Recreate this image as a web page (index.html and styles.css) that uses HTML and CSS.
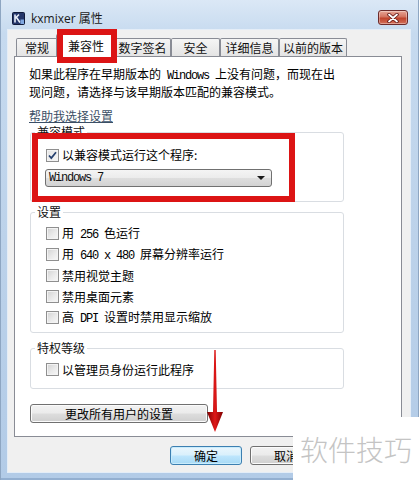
FILE: index.html
```html
<!DOCTYPE html>
<html lang="zh-CN">
<head>
  <meta charset="UTF-8">
  <meta name="viewport" content="width=device-width, initial-scale=1.0">
  <title>kxmixer 属性</title>
  <link rel="stylesheet" href="styles.css">
</head>
<body>
  <div class="window">
    <div class="titlebar">
      <svg class="app-icon" width="13" height="13" viewBox="0 0 13 13">
        <rect x="0.5" y="0.5" width="12" height="12" rx="1" fill="#24366a" stroke="#101a3a"/>
        <path d="M3 2.5v8M3 6.5l4-4M4.5 5.5l3.5 5" stroke="#e8eef8" stroke-width="1.6" fill="none"/>
        <rect x="8.5" y="7.5" width="3.5" height="4.5" fill="#7fa7e0"/>
      </svg>
      <span class="title">kxmixer 属性</span>
      <div class="close-btn">
        <svg width="12" height="10" viewBox="0 0 12 10">
          <path d="M2 1.5l8 7M10 1.5l-8 7" stroke="#5a1010" stroke-width="3.4" stroke-linecap="round"/>
          <path d="M2 1.5l8 7M10 1.5l-8 7" stroke="#ffffff" stroke-width="1.8" stroke-linecap="round"/>
        </svg>
      </div>
    </div>

    <div class="client">
      <div class="tabs">
        <div class="tab tab-general">常规</div>
        <div class="tab tab-active">兼容性</div>
        <div class="tab tab-sign">数字签名</div>
        <div class="tab tab-security">安全</div>
        <div class="tab tab-details">详细信息</div>
        <div class="tab tab-prev">以前的版本</div>
      </div>

      <div class="panel">
        <p class="intro">如果此程序在早期版本的<span class="mono"> Windows </span>上没有问题，而现在出<br>现问题，请选择与该早期版本匹配的兼容模式。</p>
        <a class="help-link" href="#">帮助我选择设置</a>

        <fieldset class="group group-compat">
          <legend>兼容模式</legend>
          <label class="check">
            <span class="box checked"><svg width="9" height="9" viewBox="0 0 9 9"><path d="M1 4.5l2.3 2.6L8 1.2" stroke="#243f6e" stroke-width="1.7" fill="none"/></svg></span>
            <span class="check-text">以兼容模式运行这个程序:</span>
          </label>
          <div class="select">
            <span class="mono select-text">Windows 7</span>
            <span class="select-arrow"></span>
          </div>
        </fieldset>

        <fieldset class="group group-settings">
          <legend>设置</legend>
          <label class="check row"><span class="box"></span><span class="check-text">用<span class="mono"> 256 </span>色运行</span></label>
          <label class="check row"><span class="box"></span><span class="check-text">用<span class="mono"> 640 x 480 </span>屏幕分辨率运行</span></label>
          <label class="check row"><span class="box"></span><span class="check-text">禁用视觉主题</span></label>
          <label class="check row"><span class="box"></span><span class="check-text">禁用桌面元素</span></label>
          <label class="check row"><span class="box"></span><span class="check-text">高<span class="mono"> DPI </span>设置时禁用显示缩放</span></label>
        </fieldset>

        <fieldset class="group group-priv">
          <legend>特权等级</legend>
          <label class="check row"><span class="box"></span><span class="check-text">以管理员身份运行此程序</span></label>
        </fieldset>

        <button class="btn btn-all-users">更改所有用户的设置</button>
      </div>

      <div class="actions">
        <button class="btn btn-dialog btn-default">确定</button>
        <button class="btn btn-dialog">取消</button>
        <button class="btn btn-dialog">应用(A)</button>
      </div>
    </div>

    <!-- annotations drawn over the dialog -->
    <div class="mark mark-tab"></div>
    <div class="mark mark-compat"></div>
    <svg class="pointer" width="20" height="86" viewBox="0 0 20 86">
      <defs>
        <linearGradient id="arrowFill" x1="0" y1="0" x2="1" y2="0">
          <stop offset="0" stop-color="#7e0000"/>
          <stop offset="0.5" stop-color="#e01818"/>
          <stop offset="1" stop-color="#7e0000"/>
        </linearGradient>
      </defs>
      <path d="M9.3 2L10.7 2L12 64L18 64L10 84L2 64L8 64Z" fill="url(#arrowFill)"/>
    </svg>
    <div class="watermark">软件技巧</div>
  </div>
</body>
</html>
```

FILE: styles.css
```css
* {
    box-sizing: border-box;
}

body {
    margin: 0;
    width: 419px;
    height: 480px;
    overflow: hidden;
    font-family: "Noto Sans CJK SC", "Noto Sans", sans-serif;
    font-size: 12px;
    color: #000000;
}

.window {
    position: relative;
    width: 419px;
    height: 480px;
    display: flex;
    flex-direction: column;
    background: linear-gradient(to bottom, #dbe8f6 0%, #c6daef 7%, #bcd2ea 50%, #b2cbe7 100%);
    box-shadow: inset 1px 0 0 #8ea6c2, inset -1px 0 0 #8ea6c2, inset 0 -2px 0 #93afd0;
}

/* title bar */
.titlebar {
    height: 30px;
    flex-shrink: 0;
    display: flex;
    align-items: flex-start;
    padding: 10px 11px 0 12px;
}

.app-icon {
    margin-top: 2px;
    flex-shrink: 0;
}

.title {
    margin-left: 6px;
    line-height: 17px;
    font-family: "Open Sans", "Noto Sans CJK SC", sans-serif;
    font-size: 12px;
    color: #1a1a1a;
}

.close-btn {
    margin-left: auto;
    width: 30px;
    height: 15px;
    display: flex;
    align-items: center;
    justify-content: center;
    border: 1px solid #6c2a2a;
    border-radius: 3px;
    background: linear-gradient(to bottom, #e8a596 0%, #d3735f 45%, #c0432c 55%, #d2705a 100%);
    box-shadow: inset 0 0 0 1px rgba(255, 255, 255, 0.35);
}

/* client area */
.client {
    height: 442px;
    flex-shrink: 0;
    margin: 0 9px 8px 8px;
    padding: 4px 8px 0 6px;
    display: flex;
    flex-direction: column;
    background-color: #f0f0f0;
    box-shadow: 0 0 0 1px #e4edf7;
}

.tabs {
    position: relative;
    z-index: 1;
    display: flex;
    align-items: flex-end;
    height: 23px;
    flex-shrink: 0;
    margin-left: 2px;
    margin-bottom: -1px;
}

.tab {
    height: 18px;
    margin-bottom: 1px;
    border: 1px solid #898c95;
    border-bottom: none;
    border-radius: 2px 2px 0 0;
    background: linear-gradient(to bottom, #f5f5f5, #e4e4e4);
    line-height: 17px;
    font-size: 12px;
    text-align: center;
    color: #111111;
}

.tab-general { width: 42px; }
.tab-sign { width: 57px; }
.tab-security { width: 49px; }
.tab-details { width: 59px; }
.tab-prev { width: 68px; }

.tab-active {
    position: relative;
    z-index: 2;
    width: 60px;
    height: 23px;
    margin: 0 -2px;
    background: #ffffff;
    line-height: 22px;
}

.panel {
    height: 381px;
    flex-shrink: 0;
    padding: 9px 14px 0;
    border: 1px solid #898c95;
    background-color: #ffffff;
    overflow: hidden;
}

.intro {
    margin: 0;
    line-height: 16px;
    white-space: pre;
}

.mono {
    font-family: "Liberation Mono", monospace;
    font-size: 12px;
    letter-spacing: -1.2px;
}

.help-link {
    display: block;
    width: fit-content;
    margin-top: 9px;
    line-height: 14px;
    color: #3b4f66;
    text-decoration: underline;
}

/* group boxes */
.group {
    width: 314px;
    min-width: 0;
    margin: 0 0 0 1px;
    padding: 0 10px 0 15px;
    border: 1px solid #d9dde2;
    border-radius: 3px;
}

.group legend {
    margin-left: -11px;
    padding: 0 2px;
    line-height: 14px;
    height: 14px;
    color: #111111;
}

.group-compat {
    margin-top: 2px;
    padding-top: 8px;
    padding-bottom: 14px;
}

.group-settings {
    margin-top: 3px;
    padding-top: 4px;
    padding-bottom: 4px;
}

.group-priv {
    margin-top: 8px;
    padding-top: 4px;
    padding-bottom: 8px;
}

.check {
    display: flex;
    align-items: center;
    height: 16px;
    line-height: 16px;
    white-space: pre;
}

.check.row {
    height: 21px;
    line-height: 21px;
}

.box {
    width: 13px;
    height: 13px;
    margin-right: 3px;
    display: flex;
    align-items: center;
    justify-content: center;
    flex-shrink: 0;
    border: 1px solid #8f8f8f;
    background: linear-gradient(135deg, #d2d2d2 0%, #eaeaea 55%, #f8f8f8 100%);
    box-shadow: inset 0 0 0 1px #f3f3f3;
}

.box.checked {
    background: linear-gradient(135deg, #e4e4e4 0%, #f6f6f6 100%);
}

.select {
    width: 227px;
    height: 18px;
    margin: 6px 0 0 -1px;
    padding: 0 6px 0 3px;
    display: flex;
    align-items: center;
    border: 1px solid #707070;
    border-radius: 3px;
    background: linear-gradient(to bottom, #f4f4f4 0%, #ececec 48%, #dedede 52%, #d2d2d2 100%);
}

.select-text {
    line-height: 16px;
    color: #111111;
}

.select-arrow {
    margin-left: auto;
    width: 0;
    height: 0;
    border-left: 4px solid transparent;
    border-right: 4px solid transparent;
    border-top: 4px solid #1a1a1a;
}

/* buttons */
.btn {
    height: 19px;
    padding: 0;
    border: 1px solid #707070;
    border-radius: 3px;
    font-family: "Noto Sans CJK SC", sans-serif;
    font-size: 12px;
    line-height: 16px;
    color: #000000;
    background: linear-gradient(to bottom, #f2f2f2 0%, #ebebeb 48%, #dddddd 52%, #cfcfcf 100%);
    box-shadow: inset 0 0 0 1px #fbfbfb;
}

.btn-all-users {
    display: block;
    width: 178px;
    margin: 15px 0 0 1px;
}

.actions {
    display: flex;
    justify-content: flex-end;
    gap: 8px;
    margin-top: 9px;
}

.btn-dialog {
    width: 72px;
}

.btn-default {
    border-color: #3c7fb1;
    background: linear-gradient(to bottom, #eaf6fd 0%, #d9f0fc 48%, #bee6fd 52%, #a7d9f5 100%);
    box-shadow: inset 0 0 0 1px #c9ecfc;
}

/* red annotations and watermark */
.mark {
    position: absolute;
    z-index: 5;
    border: 6px solid #dc1414;
}

.mark-tab {
    left: 57px;
    top: 29px;
    width: 60px;
    height: 34px;
}

.mark-compat {
    left: 32px;
    top: 133px;
    width: 263px;
    height: 69px;
}

.pointer {
    position: absolute;
    z-index: 5;
    left: 205px;
    top: 348px;
}

.watermark {
    position: absolute;
    z-index: 6;
    left: 293px;
    top: 417px;
    width: 126px;
    height: 63px;
    display: flex;
    align-items: center;
    justify-content: center;
    background-color: #ffffff;
    font-family: "Noto Sans CJK SC", sans-serif;
    font-size: 28px;
    font-weight: 300;
    color: #c4c4c4;
}
```
